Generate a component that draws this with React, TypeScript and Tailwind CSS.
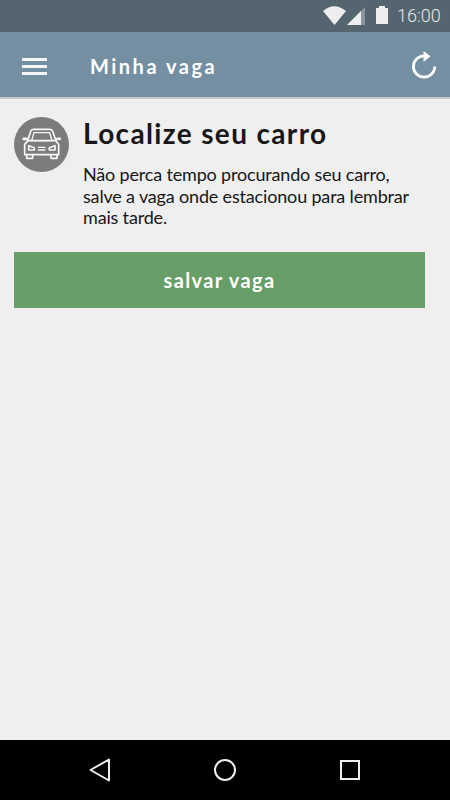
function StatusBar() {
  return (
    <div className="flex h-8 items-center justify-end bg-[#54656f] pr-2 text-[#e4e7e9]">
      <svg className="h-8 w-[78px]" viewBox="0 0 78 32" fill="#eeeeee">
        <path d="M2 11Q13 1.500 25 11L13.500 25Z" />
        <path d="M44 7V25H26Z" fillOpacity=".35" />
        <path d="M40 11V25H26Z" />
        <path d="M58 6h6v2h3v16H55V8h3Z" />
      </svg>
      <span className="ml-[-2px] w-[45px] whitespace-nowrap text-[18px] leading-8 font-light font-['Roboto',sans-serif]">
        16:00
      </span>
    </div>
  );
}

function Header() {
  return (
    <header className="flex h-[67px] items-center border-b-2 border-[#c5cacd] bg-[#748fa1] pr-[13px] pl-[22px] text-white">
      <button className="flex w-[25px] flex-col gap-1 pt-[3px]" aria-label="Menu">
        <span className="h-[3px] w-full bg-[#f4f6f8]" />
        <span className="h-[3px] w-full bg-[#f4f6f8]" />
        <span className="h-[3px] w-full bg-[#f4f6f8]" />
      </button>
      <h1 className="ml-[43px] pt-[3px] whitespace-nowrap text-[20px] font-bold tracking-[2.500px] font-['Lato',sans-serif]">
        Minha vaga
      </h1>
      <button className="ml-auto" aria-label="Atualizar">
        <svg className="h-[30px] w-[26px]" viewBox="0 0 26 30" fill="none">
          <path d="M23.800 16.500A10.700 10.700 0 1 1 13.100 5.800" stroke="#fff" strokeWidth="2.700" />
          <path d="M12.500 1L19.500 6.300L12.500 12Z" fill="#fff" />
        </svg>
      </button>
    </header>
  );
}

function CarIcon() {
  return (
    <svg className="mt-[17.500px] h-[55px] w-[55px] shrink-0" viewBox="42 34 165 165" fill="none">
      <circle cx="124.500" cy="116.500" r="82.500" fill="#7c7c7c" />
      <g stroke="#f8f8f8" strokeWidth="5" strokeLinejoin="round" strokeLinecap="round">
        <path d="M83 105L92 77Q94 71 100 71H150Q156 71 158 77L168 105" />
        <path d="M95 105L102 81H149L156 105Z" strokeWidth="4" />
        <path d="M84 105L74 116V147H176V116L167 105Z" />
        <path d="M83 102L80 98H70V101H78M168 102L172 98H181V101H174" />
        <path d="M86 120L103 126V133H86ZM165 120L148 126V133H165Z" />
        <path d="M115 125H135M115 133H135" strokeWidth="4" />
        <path d="M80 147V158H98V147M153 147V158H171V147" />
      </g>
    </svg>
  );
}

function NavBar() {
  return (
    <nav className="flex h-[60px] items-center justify-between bg-black pr-[88px] pl-[88px]">
      <svg className="h-6 w-6" viewBox="0 0 24 24" fill="none" stroke="#eeeeee" strokeWidth="2" strokeLinejoin="round">
        <path d="M2.500 12L21 1.500V22.500Z" />
      </svg>
      <svg className="h-6 w-6" viewBox="0 0 24 24" fill="none" stroke="#eeeeee" strokeWidth="2">
        <circle cx="12" cy="12" r="10" />
      </svg>
      <svg className="h-6 w-6" viewBox="0 0 24 24" fill="none" stroke="#eeeeee" strokeWidth="2">
        <rect x="3" y="3" width="18" height="18" />
      </svg>
    </nav>
  );
}

export default function App() {
  return (
    <div className="flex h-screen w-full flex-col overflow-hidden bg-[#efefef]">
      <StatusBar />
      <Header />
      <main className="flex-1 pr-[25px] pl-[14px]">
        <div className="flex gap-[14px]">
          <CarIcon />
          <div className="pt-[18px] text-[#171717]">
            <h2 className="whitespace-nowrap text-[28px] leading-8 font-bold tracking-[1.350px] font-['Lato',sans-serif]">
              Localize seu carro
            </h2>
            <p className="mt-[15px] whitespace-nowrap text-[18px] leading-[21.600px] tracking-[-0.170px] font-['Lato',sans-serif]">
              <span className="block">Não perca tempo procurando seu carro,</span>
              <span className="block">salve a vaga onde estacionou para lembrar</span>
              <span className="block">mais tarde.</span>
            </p>
          </div>
        </div>
        <button className="mt-[23px] flex h-14 w-full items-center justify-center bg-[#679d66] text-[20px] font-bold tracking-[1.350px] text-white font-['Lato',sans-serif]">
          salvar vaga
        </button>
      </main>
      <NavBar />
    </div>
  );
}
